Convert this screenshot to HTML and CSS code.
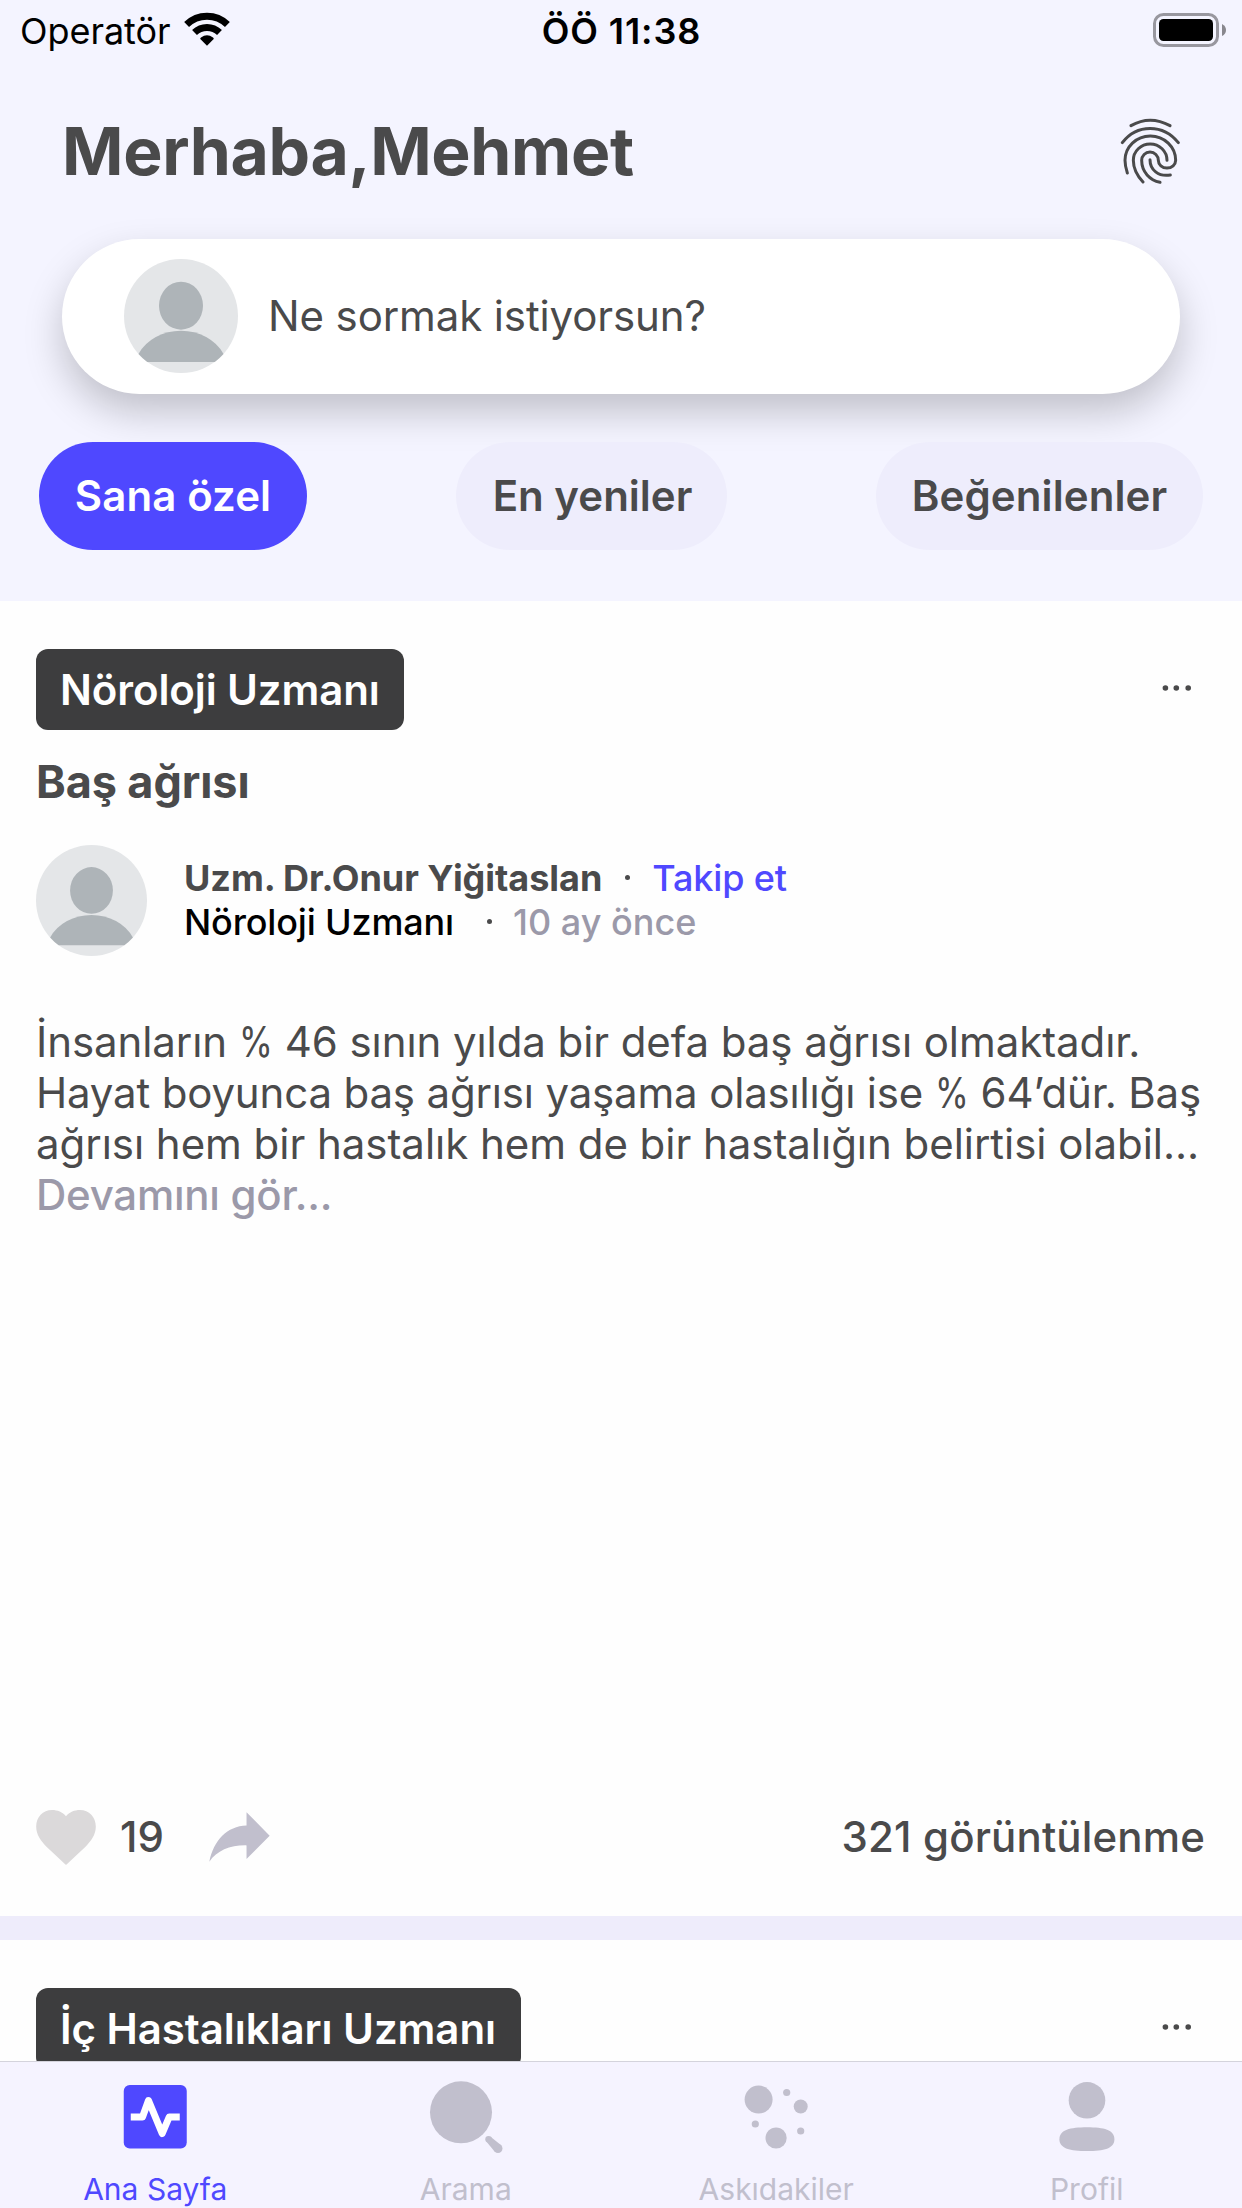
FILE: index.html
```
<!DOCTYPE html>
<html lang="tr">
<head>
<meta charset="utf-8">
<title>Ana Sayfa</title>
<link rel="stylesheet" href="styles.css">
</head>
<body>
<svg class="defs" aria-hidden="true">
  <symbol id="avatar" viewBox="0 0 114 114">
    <circle cx="57" cy="57" r="57" fill="#e4e6e8"/>
    <ellipse cx="57" cy="46.7" rx="22" ry="24" fill="#aeb4b8"/>
    <path d="M14.500 95A47 40.500 0 0 1 99.500 95A57 57 0 0 1 90.700 103H23.300A57 57 0 0 1 14.500 95Z" fill="#aeb4b8"/>
  </symbol>
  <symbol id="more" viewBox="0 0 30 8">
    <circle cx="3.4" cy="4" r="2.8"/><circle cx="14.3" cy="4" r="2.8"/><circle cx="26.2" cy="4" r="2.8"/>
  </symbol>
</svg>
<div class="app">
  <header class="header">
    <div class="status">
      <div class="carrier">
        <span>Operatör</span>
        <svg width="46" height="35" viewBox="0 0 46 35">
          <g fill="none" stroke="#000" stroke-width="7">
            <path d="M2.6 12.4A29.3 29.3 0 0 1 43.4 12.4"/>
            <path d="M10.5 20.6A18 18 0 0 1 35.5 20.6"/>
          </g>
          <path d="M23 33.7L16.3 27Q16 26 17 25.400A10 10 0 0 1 29 25.400Q30 26 29.700 27Z"/>
        </svg>
      </div>
      <span class="clock">ÖÖ 11:38</span>
      <svg class="battery" width="73" height="34" viewBox="0 0 73 34">
        <rect x="1.500" y="1.500" width="63" height="31" rx="9" fill="none" stroke="#98979f" stroke-width="3"/>
        <rect x="6" y="6" width="54" height="22" rx="4.500"/>
        <path d="M69 11Q73 13 73 17T69 23Z" fill="#88878e"/>
      </svg>
    </div>
    <div class="greeting">
      <h1>Merhaba,Mehmet</h1>
      <svg width="60" height="67" viewBox="90 350 180 201" fill="none" stroke="#4a4a4b" stroke-width="9" stroke-linecap="round">
        <path d="M123 376Q180 343 240 376"/>
        <path d="M97 427C140 370 220 370 265 427"/>
        <path d="M112 518C106 500 105 495 105 480A76 73 0 0 1 257 480A26 23 0 0 1 205 480A25 25 0 0 0 155 480C155 515 180 540 210 546"/>
        <path d="M159 545C140 525 130 505 130 480A50.500 49 0 0 1 231 480"/>
        <path d="M180 478C180 508 205 530 241 524"/>
      </svg>
    </div>
    <div class="ask">
      <svg width="114" height="114"><use href="#avatar"/></svg>
      <span>Ne sormak istiyorsun?</span>
    </div>
    <nav class="filters">
      <a class="pill pill-first">Sana özel</a>
      <a class="pill pill-second">En yeniler</a>
      <a class="pill pill-third">Beğenilenler</a>
    </nav>
  </header>
  <main class="feed">
    <article class="post">
      <div class="post-top">
        <span class="tag">Nöroloji Uzmanı</span>
        <svg class="more" width="30" height="8"><use href="#more"/></svg>
      </div>
      <h2>Baş ağrısı</h2>
      <div class="author">
        <svg width="111" height="111"><use href="#avatar"/></svg>
        <div class="author-text">
          <div class="line"><b>Uzm. Dr.Onur Yiğitaslan</b><i class="dot"></i><span class="follow">Takip et</span></div>
          <div class="line"><span class="role">Nöroloji Uzmanı</span><i class="dot dot-role"></i><span class="ago">10 ay önce</span></div>
        </div>
      </div>
      <div class="body">
        <div class="l1">İnsanların <span class="pct">%</span> 46 sının yılda bir defa baş ağrısı olmaktadır.</div>
        <div class="l2">Hayat boyunca baş ağrısı yaşama olasılığı ise <span class="pct">%</span> 64’dür. Baş</div>
        <div class="l3">ağrısı hem bir hastalık hem de bir hastalığın belirtisi olabil...</div>
        <div class="readmore">Devamını gör...</div>
      </div>
      <footer class="actions">
        <svg width="60" height="55" viewBox="108 90 180 166"><path fill="#dbd9da" d="M198 109C188 96 172 90 156 90C128 90 108 112 108 140C108 165 122 183 140 202L198 256L256 202C274 183 288 165 288 140C288 112 268 90 240 90C224 90 208 96 198 109Z"/></svg>
        <span class="likes">19</span>
        <svg width="61" height="50" viewBox="626 96 182 148"><path fill="#c1bfcd" d="M738 96L807 166L738 236V195C690 194 650 210 627 244C640 180 680 138 738 136Z"/></svg>
        <span class="views">321 görüntülenme</span>
      </footer>
    </article>
    <article class="post">
      <div class="post-top">
        <span class="tag tag-wide">İç Hastalıkları Uzmanı</span>
        <svg class="more" width="30" height="8"><use href="#more"/></svg>
      </div>
    </article>
  </main>
  <nav class="tabs">
    <a class="tab active">
      <svg width="80" height="80" viewBox="0 0 80 80"><rect x="8.750" y="9" width="63" height="63.500" rx="6"/><path d="M15.750 41H27.500L33.500 24.500L47.200 57.500L54.200 41H64.750" fill="none" stroke="#fff" stroke-width="7" stroke-linejoin="round"/></svg>
      <span>Ana Sayfa</span>
    </a>
    <a class="tab">
      <svg width="80" height="80" viewBox="0 0 80 80"><circle cx="35" cy="36.300" r="31"/><circle cx="62.600" cy="63.300" r="3.300"/><circle cx="72" cy="72.500" r="4.500"/><path d="M64.900 61L75.200 69.300L68.800 75.700L60.300 65.600Z"/></svg>
      <span>Arama</span>
    </a>
    <a class="tab">
      <svg width="80" height="80" viewBox="0 0 80 80"><circle cx="22.600" cy="23.600" r="14"/><circle cx="50.700" cy="16.500" r="3.600"/><circle cx="64.700" cy="30.500" r="7"/><circle cx="19.300" cy="48" r="3.600"/><circle cx="40.100" cy="62" r="10.600"/><circle cx="64.700" cy="55" r="3.600"/></svg>
      <span>Askıdakiler</span>
    </a>
    <a class="tab">
      <svg width="80" height="80" viewBox="0 0 80 80"><circle cx="40" cy="24.300" r="18.300"/><path d="M40 51.300C57 51.300 67.400 54 67.400 63.200C67.400 72.500 57 75 40 75C23 75 12.400 72.500 12.400 63.200C12.400 54 23 51.300 40 51.300Z"/></svg>
      <span>Profil</span>
    </a>
  </nav>
</div>
</body>
</html>
```
FILE: styles.css
```
* { box-sizing: border-box; margin: 0; padding: 0; }
body { font-family: Inter, "Noto Sans", sans-serif; color: #4a4a4b; background: #fefefe; }
svg { display: block; flex: none; }
.defs { display: none; }

.app { width: 1242px; height: 2208px; display: flex; flex-direction: column; overflow: hidden; }

.header { flex: none; height: 601px; background: #f4f4ff; }
.status { height: 62px; padding: 0 16px 0 20px; display: grid; grid-template-columns: 1fr auto 1fr; align-items: center; font-size: 36px; line-height: 62px; color: #000; }
.carrier { display: flex; align-items: center; gap: 13px; letter-spacing: -0.05px; }
.carrier svg { margin-bottom: 3px; }
.clock { font-weight: 600; letter-spacing: 0.9px; padding-right: 3px; }
.battery { justify-self: end; margin-bottom: 2px; }

.greeting { height: 177px; padding: 0 62px; display: flex; align-items: center; justify-content: space-between; }
h1 { font-size: 66px; font-weight: 700; line-height: 80px; letter-spacing: -0.32px; }

.ask { height: 155px; margin: 0 62px; padding-left: 62px; display: flex; align-items: center; gap: 30px; border-radius: 78px; background: #fff; box-shadow: 0 18px 38px rgba(0, 0, 0, 0.21); font-size: 42px; letter-spacing: -0.12px; }
.ask svg { margin-bottom: 1px; }
.ask span { padding-bottom: 2px; }

.filters { position: relative; margin-top: 48px; padding: 0 39px; display: flex; justify-content: space-between; }
.pill { height: 108px; border-radius: 54px; background: #eeedfc; font-size: 42px; font-weight: 600; line-height: 108px; text-align: center; letter-spacing: 0.1px; }
.pill-first { width: 268px; background: #4f48ff; color: #fff; }
.pill-second { width: 271px; padding-left: 2px; letter-spacing: 0; }
.pill-third { width: 327px; }

.feed { flex: 1; min-height: 0; overflow: hidden; background: #eeecfb; }
.post { height: 1315px; padding: 48px 36px 49px; display: flex; flex-direction: column; background: #fefefe; }
.post + .post { margin-top: 24px; }
.post-top { display: flex; align-items: center; justify-content: space-between; }
.tag { height: 81px; padding: 0 24px; border-radius: 12px; background: #3d3d3e; color: #fff; font-size: 42px; font-weight: 600; line-height: 81px; letter-spacing: -0.1px; }
.tag-wide { padding-right: 25px; letter-spacing: -0.06px; }
.more { margin: 0 14px 4px 0; fill: #4a4a4b; }
h2 { margin-top: 25px; font-size: 45px; font-weight: 700; line-height: 54px; letter-spacing: -0.1px; }

.author { margin-top: 36px; display: flex; align-items: center; gap: 37px; }
.author-text { padding-bottom: 2px; font-size: 36px; line-height: 44px; }
.line { display: flex; align-items: center; }
.line b { font-weight: 700; letter-spacing: -0.04px; }
.dot { width: 5px; height: 5px; margin: 0 22px 0 23px; border-radius: 50%; background: #4a4a4b; }
.dot-role { margin: 0 21px 0 33px; }
.follow { font-weight: 500; color: #4f48ff; letter-spacing: -0.15px; }
.role { font-weight: 500; color: #000; letter-spacing: -0.16px; }
.ago { font-weight: 500; color: #9b99a9; }

.body { margin-top: 60px; font-size: 42px; line-height: 51px; white-space: nowrap; }
.pct { display: inline-block; margin-right: -7px; transform: scaleX(0.82); transform-origin: 0 50%; }
.l1 { letter-spacing: -0.08px; }
.l2 { letter-spacing: -0.17px; }
.l3 { letter-spacing: -0.04px; }
.readmore { font-weight: 500; color: #9b99a9; letter-spacing: -0.25px; }

.actions { height: 60px; margin-top: auto; display: flex; align-items: center; font-size: 42px; font-weight: 500; }
.likes { margin: 0 45px 1px 24px; }
.views { margin: 0 1px 1px auto; letter-spacing: 0.15px; }

.tabs { flex: none; height: 147px; display: grid; grid-template-columns: repeat(4, 1fr); border-top: 1px solid #d4d3dc; background: #f5f3ff; }
.tab { padding-top: 14px; display: flex; flex-direction: column; align-items: center; gap: 15px; font-size: 30px; line-height: 36px; color: #c1bfcd; fill: #c1bfcd; }
.active { color: #4f48ff; fill: #4f48ff; }
```
